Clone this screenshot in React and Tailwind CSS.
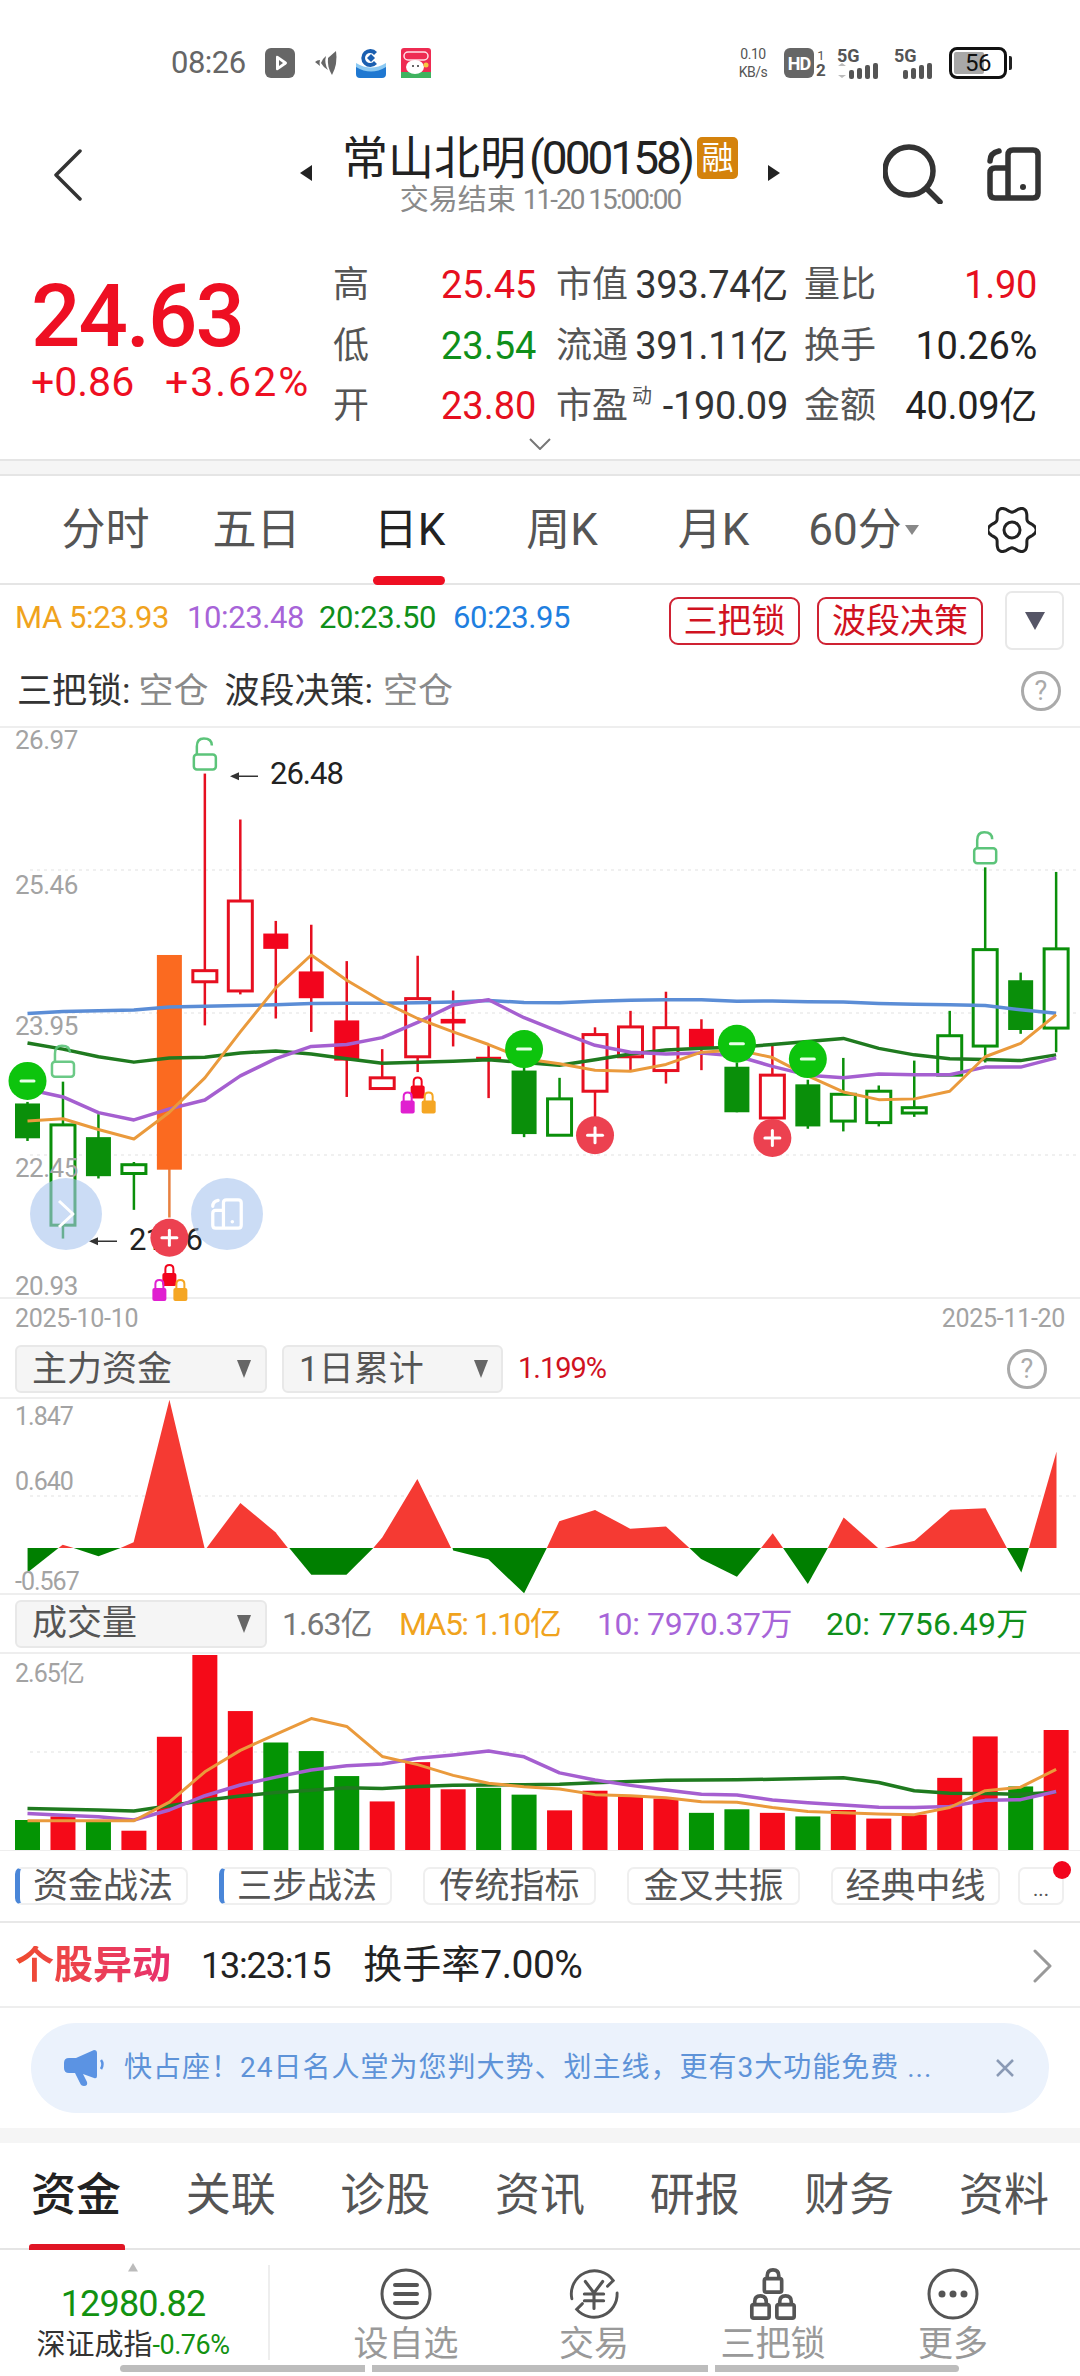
const RED = '#f2051d';
const GREEN = '#0a8f0a';

// chart data was read off the reference, y values are in crop coordinates
const candles = [
  ['G', 998, 1100, 1002, 1093],
  ['g', 945, 1355, 1058, 1320],
  ['G', 1030, 1198, 1090, 1192],
  ['g', 1155, 1280, 1162, 1185],
  ['O', 614, 1300, 614, 1175],
  ['r', 140, 798, 655, 684],
  ['r', 260, 717, 473, 708],
  ['R', 525, 780, 558, 598],
  ['R', 535, 815, 657, 727],
  ['R', 630, 985, 785, 890],
  ['r', 860, 965, 935, 963],
  ['r', 616, 920, 728, 880],
  ['R', 707, 853, 781, 793],
  ['R', 850, 988, 880, 890],
  ['G', 905, 1090, 916, 1082],
  ['g', 935, 1085, 990, 1085],
  ['r', 803, 1040, 822, 970],
  ['r', 760, 918, 802, 880],
  ['r', 710, 950, 804, 916],
  ['R', 782, 915, 807, 855],
  ['G', 895, 1025, 906, 1025],
  ['r', 850, 1050, 928, 1040],
  ['G', 940, 1068, 952, 1062],
  ['g', 883, 1075, 978, 1048],
  ['g', 955, 1062, 970, 1052],
  ['g', 890, 1037, 1013, 1027],
  ['g', 760, 930, 825, 928],
  ['g', 385, 895, 600, 852],
  ['G', 660, 820, 680, 810],
  ['g', 397, 868, 598, 805],
];

const ma60 = [767, 762, 760, 758, 750, 748, 746, 744, 741, 740, 740, 739, 737, 733, 738, 739, 735, 732, 731, 731, 735, 734, 736, 737, 741, 743, 744, 746, 757, 766];
const ma20 = [844, 860, 880, 894, 883, 881, 870, 865, 873, 885, 897, 894, 892, 888, 895, 902, 888, 873, 862, 858, 855, 848, 840, 832, 858, 875, 885, 887, 890, 875];
const ma10 = [965, 985, 1026, 1045, 1016, 993, 930, 885, 853, 848, 830, 790, 745, 731, 778, 815, 850, 868, 873, 870, 878, 905, 928, 935, 925, 927, 927, 907, 907, 883];
const ma5 = [1048, 1042, 1070, 1095, 1025, 935, 815, 700, 614, 680, 735, 780, 815, 848, 885, 898, 915, 918, 900, 868, 862, 882, 930, 972, 992, 990, 970, 880, 845, 770];

const volumes = [
  ['G', 1400], ['R', 1390], ['G', 1405], ['R', 1430], ['R', 1167], ['R', 938], ['R', 1095], ['G', 1183], ['G', 1207], ['G', 1277],
  ['R', 1348], ['R', 1238], ['R', 1314], ['G', 1310], ['G', 1329], ['R', 1373], ['R', 1318], ['R', 1330], ['R', 1340], ['G', 1380],
  ['G', 1370], ['R', 1380], ['G', 1390], ['R', 1372], ['R', 1396], ['R', 1385], ['R', 1282], ['R', 1166], ['G', 1306], ['R', 1148],
];
const vol5 = [1402, 1402, 1402, 1402, 1350, 1265, 1205, 1160, 1116, 1138, 1222, 1245, 1275, 1297, 1307, 1313, 1329, 1332, 1338, 1349, 1350, 1365, 1376, 1380, 1383, 1385, 1365, 1318, 1308, 1258];
const vol10 = [1382, 1387, 1391, 1400, 1372, 1332, 1302, 1280, 1260, 1248, 1243, 1227, 1218, 1207, 1223, 1268, 1288, 1303, 1316, 1328, 1330, 1344, 1352, 1358, 1364, 1365, 1362, 1345, 1343, 1320];
const vol20 = [1368, 1370, 1372, 1375, 1360, 1345, 1333, 1323, 1317, 1310, 1312, 1306, 1303, 1302, 1301, 1300, 1296, 1292, 1289, 1288, 1287, 1286, 1284, 1282, 1295, 1318, 1325, 1326, 1328, 1322];

const moneyRed = [
  [[85, 641], [91, 632], [107, 641]],
  [[175, 641], [194, 625], [246, 226], [297, 641]],
  [[300, 641], [349, 515], [400, 597], [418, 641]],
  [[542, 641], [555, 612], [606, 448], [655, 641]],
  [[794, 641], [812, 566], [864, 535], [915, 587], [967, 581], [1001, 641]],
  [[1105, 641], [1122, 600], [1137, 641]],
  [[1202, 641], [1225, 556], [1275, 641]],
  [[1284, 641], [1328, 621], [1380, 534], [1431, 530], [1462, 641]],
  [[1494, 641], [1534, 372], [1534, 641]],
];
const moneyGreen = [
  [[40, 641], [85, 641], [40, 710]],
  [[107, 641], [143, 664], [175, 641]],
  [[420, 641], [452, 716], [503, 716], [542, 641]],
  [[657, 641], [658, 648], [709, 673], [761, 768], [794, 641]],
  [[1001, 641], [1018, 672], [1070, 722], [1105, 641]],
  [[1137, 641], [1173, 742], [1202, 641]],
  [[1462, 641], [1483, 710], [1494, 641]],
];

const cx = (i) => 27.5 + 35.47 * i;
const kY = (z) => z / 2.613 - 8;
const moneyY = (z) => z / 2.8 - 80;
const volY = (z) => z / 2.8 - 334;

const linePoints = (arr, toY) => arr.map((v, i) => `${cx(i)},${toY(v)}`).join(' ');

// six lobed outline of the settings gear
const gearPoints = Array.from({ length: 96 }, (_, i) => {
  const a = (i / 96) * Math.PI * 2;
  const r = 21 + 3.2 * Math.cos(6 * a);
  return `${24 + r * Math.cos(a)},${24 + r * Math.sin(a)}`;
}).join(' ');

const OpenLock = ({ x, y, opacity = 1 }) => (
  <g fill="none" stroke="#5cc47a" strokeWidth="2.5" opacity={opacity} transform={`translate(${x} ${y})`}>
    <rect x="-11" y="0" width="22" height="15" rx="3" />
    <path d="M-8 0 V-8 Q-8 -16 -1 -16 Q7 -16 7 -9" />
  </g>
);

const SmallLock = ({ x, y, color }) => (
  <g transform={`translate(${x} ${y})`}>
    <rect x="-7" y="0" width="14" height="13" rx="2" fill={color} />
    <path d="M-4 1 V-4 Q-4 -8 0 -8 Q4 -8 4 -4 V1" fill="none" stroke={color} strokeWidth="2" />
  </g>
);

const LockTrio = ({ i, z }) => {
  const x = cx(i);
  const y = kY(z);
  return (
    <g>
      <SmallLock x={x} y={y} color="#f2051d" />
      <SmallLock x={x - 10} y={y + 15} color="#e01fd0" />
      <SmallLock x={x + 11} y={y + 15} color="#f5a623" />
    </g>
  );
};

const MinusDot = ({ i, z }) => (
  <g transform={`translate(${cx(i)} ${kY(z)})`}>
    <circle r="19" fill="#0dc40d" />
    <rect x="-8" y="-1.5" width="16" height="3" rx="1.5" fill="#e8ffe8" />
  </g>
);

const PlusDot = ({ i, z }) => (
  <g transform={`translate(${cx(i)} ${kY(z)})`}>
    <circle r="19" fill="#ec4150" />
    <rect x="-9" y="-1.5" width="18" height="3" rx="1.5" fill="#fff" />
    <rect x="-1.5" y="-9" width="3" height="18" rx="1.5" fill="#fff" />
  </g>
);

const PhoneIcon = ({ color, size = 54 }) => (
  <svg width={size} height={size} viewBox="0 0 54 54" fill="none" stroke={color} strokeWidth="5.5">
    <path d="M21 51 V8 Q21 3 26 3 H46 Q51 3 51 8 V46 Q51 51 46 51 H8 Q3 51 3 46 V26 Q3 21 8 21 H21" />
    <path d="M3 14 Q3 6 12 4" strokeLinecap="round" />
    <circle cx="36" cy="40" r="3" fill={color} stroke="none" />
  </svg>
);

const HelpIcon = () => (
  <span className="flex h-[40px] w-[40px] items-center justify-center rounded-full border-[3px] border-[#aaaaaa] text-[27px] leading-none text-[#aaaaaa]">?</span>
);

const Caret = ({ color = '#666666' }) => (
  <svg width="16" height="22" viewBox="0 0 16 22">
    <path d="M1 2 H15 L8 20Z" fill={color} />
  </svg>
);

const StatusBar = () => (
  <div className="flex h-[126px] items-center pl-[171px]">
    <span className="w-[94px] text-[31px] tracking-[-0.5px] text-[#666666]">08:26</span>
    <svg width="30" height="30" viewBox="0 0 30 30">
      <rect width="30" height="30" rx="6" fill="#666666" />
      <path d="M11 9 Q11 7 13 8 L21 13.5 Q23 15 21 16.5 L13 22 Q11 23 11 21Z" fill="#ffffff" />
      <path d="M14 12 L18 15 L14 18Z" fill="#666666" />
    </svg>
    <svg className="ml-[19px]" width="24" height="24" viewBox="0 0 24 24" fill="#666666">
      <path d="M22 0 Q24 13 18 24 Q13 16 14 7Z" />
      <path d="M12 5 Q10 12 14 19 Q9 16 7 12 Q9 7 12 5Z" />
      <path d="M6 9 Q5 12 6 15 L1 11 Q3 9 6 9Z" />
    </svg>
    <svg className="ml-[18px]" width="30" height="30" viewBox="0 0 30 30">
      <path d="M0 17 Q15 26 30 17 V26 Q30 30 26 30 H4 Q0 30 0 26Z" fill="#1f78d1" />
      <path d="M0 15 Q15 24 30 15 V19 Q15 28 0 19Z" fill="#8cc9f2" />
      <path d="M21 4 A9 9 0 1 0 21 16 L18 13 A5 5 0 1 1 18 7Z" fill="#1a5fb0" />
      <path d="M15 6 L19 10 L15 14 L11 10Z" fill="#1a5fb0" />
    </svg>
    <svg className="ml-[15px]" width="30" height="30" viewBox="0 0 30 30">
      <rect width="30" height="30" rx="3" fill="#ee2b52" />
      <rect x="3" y="4" width="24" height="8" rx="4" fill="none" stroke="#ffe1e8" strokeWidth="1.5" />
      <rect y="24" width="30" height="6" fill="#3fb35f" />
      <ellipse cx="14" cy="19" rx="9" ry="7" fill="#ffffff" />
      <circle cx="12" cy="18" r="1" fill="#333" />
      <circle cx="17" cy="18" r="1" fill="#333" />
      <circle cx="25" cy="17" r="2.5" fill="#f5c842" />
    </svg>

    <div className="ml-[307px] flex w-[30px] flex-col items-center text-[14px] leading-[18px] text-[#555555]">
      <span className="tracking-[-0.5px]">0.10</span>
      <span className="tracking-[-0.5px]">KB/s</span>
    </div>
    <span className="ml-[16px] flex h-[30px] w-[30px] items-center justify-center rounded-[6px] bg-[#666666] text-[18px] font-bold tracking-[-1px] text-white">HD</span>
    <div className="ml-[1px] flex w-[12px] flex-col items-center font-bold leading-[15px] text-[#555555]">
      <span className="text-[13px] font-normal">1</span>
      <span className="text-[17px]">2</span>
    </div>
    <div className="ml-[10px] flex w-[44px] flex-col">
      <span className="text-[18px] font-bold leading-[15px] text-[#555555]">5G</span>
      <svg width="44" height="16" viewBox="0 0 44 16">
        <path d="M1 3 L5 0 L9 3Z M1 12 L9 12 L5 15Z" fill="#bbbbbb" />
        <rect x="12" y="7" width="5" height="9" rx="2" fill="#555555" />
        <rect x="20" y="5" width="5" height="11" rx="2" fill="#555555" />
        <rect x="28" y="2" width="5" height="14" rx="2" fill="#555555" />
        <rect x="36" y="0" width="5" height="16" rx="2" fill="#555555" />
      </svg>
    </div>
    <div className="ml-[13px] flex w-[46px] flex-col">
      <span className="text-[18px] font-bold leading-[15px] text-[#555555]">5G</span>
      <svg width="46" height="16" viewBox="0 0 46 16">
        <rect x="9" y="7" width="5" height="9" rx="2" fill="#555555" />
        <rect x="17" y="5" width="5" height="11" rx="2" fill="#555555" />
        <rect x="25" y="2" width="5" height="14" rx="2" fill="#555555" />
        <rect x="33" y="0" width="5" height="16" rx="2" fill="#555555" />
      </svg>
    </div>
    <div className="ml-[9px] flex items-center">
      <div className="relative flex h-[32px] w-[58px] items-center rounded-[8px] border-[3px] border-[#111111] p-[2px]">
        <div className="h-full w-[30px] rounded-[2px] bg-[#a8a8a8]" />
        <span className="absolute inset-0 flex items-center justify-center text-[24px] tracking-[-0.5px] text-[#111111]">56</span>
      </div>
      <div className="ml-[2px] h-[14px] w-[3px] rounded-r-[2px] bg-[#222222]" />
    </div>
  </div>
);

const Header = () => (
  <div className="flex h-[96px]">
    <div className="w-[300px] pl-[53px] pt-[23px]">
      <svg width="30" height="52" viewBox="0 0 30 52">
        <path d="M27 2 L3 26 L27 50" fill="none" stroke="#333333" strokeWidth="3.5" strokeLinecap="round" strokeLinejoin="round" />
      </svg>
    </div>
    <div className="flex w-[480px] flex-col items-center">
      <div className="flex h-[56px] w-full items-center justify-between pt-[8px]">
        <svg className="mt-[30px]" width="12" height="16" viewBox="0 0 12 16"><path d="M12 0 V16 L0 8Z" fill="#222222" /></svg>
        <div className="flex items-center">
          <span className="text-[46px] leading-none text-[#222222]">常山北明</span>
          <span className="ml-[3px] text-[46px] leading-none tracking-[-3px] text-[#222222]">(000158)</span>
          <span className="ml-[5px] flex h-[42px] w-[41px] items-center justify-center rounded-[5px] bg-[#d4820c] text-[32px] leading-none text-white">融</span>
        </div>
        <svg className="mt-[30px]" width="12" height="16" viewBox="0 0 12 16"><path d="M0 0 V16 L12 8Z" fill="#222222" /></svg>
      </div>
      <div className="flex h-[34px] items-center pt-[2px] text-[#8a8a8a]">
        <span className="text-[29px] leading-none">交易结束</span>
        <span className="ml-[7px] text-[28px] leading-none tracking-[-2px]">11-20 15:00:00</span>
      </div>
    </div>
    <div className="flex flex-1 items-start pl-[103px] pt-[18px]">
      <svg width="60" height="60" viewBox="0 0 60 60">
        <circle cx="26" cy="27" r="24" fill="none" stroke="#333333" strokeWidth="5.5" />
        <path d="M44 45 L57 58" stroke="#333333" strokeWidth="5.5" strokeLinecap="round" />
      </svg>
      <div className="ml-[44px] mt-[3px]">
        <PhoneIcon color="#333333" />
      </div>
    </div>
  </div>
);

const quoteRows = [
  { a: '高', av: '25.45', ac: 'text-[#e60f20]', b: '市值', bv: '393.74亿', c: '量比', cv: '1.90', cc: 'text-[#e60f20]' },
  { a: '低', av: '23.54', ac: 'text-[#0f8f1a]', b: '流通', bv: '391.11亿', c: '换手', cv: '10.26%', cc: 'text-[#222222]' },
  { a: '开', av: '23.80', ac: 'text-[#e60f20]', b: '市盈', sup: '动', bv: '-190.09', c: '金额', cv: '40.09亿', cc: 'text-[#222222]' },
];

const Quote = () => (
  <div className="relative flex h-[237px]">
    <div className="w-[333px] pl-[31px] pt-[54px]">
      <div className="h-[80px] text-[87px] font-medium leading-[80px] tracking-[-2px] text-[#ee0f22]">24.63</div>
      <div className="mt-[2px] flex h-[50px] items-center text-[41px] text-[#ee0f22]">
        <span className="w-[134px]">+0.86</span>
        <span className="tracking-[2px]">+3.62%</span>
      </div>
    </div>
    <div className="pt-[33px]">
      {quoteRows.map((row) => (
        <div key={row.a} className="flex h-[60.5px] items-center text-[#555555]">
          <span className="w-[108px] text-[36px] leading-none">{row.a}</span>
          <span className={`w-[115px] text-[38px] leading-none ${row.ac}`}>{row.av}</span>
          <div className="flex w-[232px] items-center justify-between">
            <span className="relative text-[36px] leading-none">
              {row.b}
              {row.sup && <sup className="absolute left-[76px] top-[-2px] text-[20px] leading-none">{row.sup}</sup>}
            </span>
            <span className="text-[38px] leading-none tracking-[-0.3px] text-[#333333]">{row.bv}</span>
          </div>
          <div className="ml-[16px] flex w-[233px] items-center justify-between">
            <span className="text-[36px] leading-none">{row.c}</span>
            <span className={`text-[38px] leading-none tracking-[-0.3px] ${row.cc}`}>{row.cv}</span>
          </div>
        </div>
      ))}
    </div>
    <svg className="absolute left-[529px] top-[216px]" width="22" height="12" viewBox="0 0 22 12">
      <path d="M1 1 L11 11 L21 1" fill="none" stroke="#777777" strokeWidth="2" />
    </svg>
  </div>
);

const PeriodTabs = () => (
  <div className="grid h-[109px] grid-cols-[149px_153px_153px_152px_151px_149px_142px] items-center border-b-2 border-[#e5e5e5] pl-[31px] text-[44px] leading-none text-[#555555]">
    <span className="text-center">分时</span>
    <span className="text-center">五日</span>
    <span className="relative text-center text-[#222222]">
      日K
      <span className="absolute bottom-[-33px] left-[40px] h-[9px] w-[72px] rounded-[5px] bg-[#ee0f22]" />
    </span>
    <span className="text-center">周K</span>
    <span className="text-center">月K</span>
    <span className="flex items-center justify-center">
      60分
      <svg className="ml-[3px]" width="14" height="12" viewBox="0 0 14 12"><path d="M0 1 H14 L7 11Z" fill="#888888" /></svg>
    </span>
    <span className="flex justify-start pl-[50px]">
      <svg width="48" height="48" viewBox="0 0 48 48" fill="none" stroke="#222222" strokeWidth="3">
        <polygon points={gearPoints} strokeLinejoin="round" />
        <circle cx="24" cy="24" r="8" />
      </svg>
    </span>
  </div>
);

const MaRow = () => (
  <div className="flex h-[65px] items-center pl-[15px] text-[31px] leading-none">
    <span className="w-[172px] tracking-[-0.4px] text-[#f0a31d]">MA 5:23.93</span>
    <span className="w-[132px] tracking-[-0.4px] text-[#a764d8]">10:23.48</span>
    <span className="w-[134px] tracking-[-0.4px] text-[#0f8f1a]">20:23.50</span>
    <span className="w-[216px] tracking-[-0.4px] text-[#1f7fe0]">60:23.95</span>
    <span className="mt-[6px] flex h-[48px] w-[131px] items-center justify-center rounded-[9px] border-2 border-[#cf2233] text-[34px] text-[#d0121f]">三把锁</span>
    <span className="ml-[17px] mt-[6px] flex h-[48px] w-[166px] items-center justify-center rounded-[9px] border-2 border-[#cf2233] text-[34px] text-[#d0121f]">波段决策</span>
    <span className="ml-[22px] mt-[6px] flex h-[59px] w-[59px] items-center justify-center rounded-[7px] border-2 border-[#e8e8e8]">
      <svg width="20" height="18" viewBox="0 0 20 18"><path d="M0 0 H20 L10 18Z" fill="#555566" /></svg>
    </span>
  </div>
);

const SignalRow = () => (
  <div className="flex h-[78px] items-center justify-between border-b-2 border-[#eeeeee] pl-[17px] pr-[19px] pt-[6px] text-[35px] leading-none">
    <div className="flex items-center">
      <span className="text-[#333333]">三把锁:</span>
      <span className="ml-[8px] text-[#8a8a8a]">空仓</span>
      <span className="ml-[16px] text-[#333333]">波段决策:</span>
      <span className="ml-[10px] text-[#8a8a8a]">空仓</span>
    </div>
    <HelpIcon />
  </div>
);

const KChart = () => (
  <div className="relative h-[569px] w-full">
    <svg className="overflow-visible" width="1080" height="569" viewBox="0 0 1080 569">
      {[142, 285, 427].map((y) => (
        <line key={y} x1="30" x2="1080" y1={y} y2={y} stroke="#f0f0f0" strokeWidth="2" strokeDasharray="3 4" />
      ))}

      {candles.map(([type, high, low, top, bottom], i) => {
        const color = type === 'O' ? '#e8803f' : type === 'r' || type === 'R' ? '#e60f20' : GREEN;
        const hollow = type === 'r' || type === 'g';
        const fill = hollow ? '#ffffff' : type === 'O' ? '#fb6a20' : type === 'R' ? RED : GREEN;
        return (
          <g key={i}>
            <line x1={cx(i)} x2={cx(i)} y1={kY(high)} y2={kY(low)} stroke={color} strokeWidth="2.5" />
            <rect
              x={cx(i) - (hollow ? 12 : 12.5)}
              y={kY(top)}
              width={hollow ? 24 : 25}
              height={kY(bottom) - kY(top)}
              fill={fill}
              stroke={hollow ? color : 'none'}
              strokeWidth="3"
            />
          </g>
        );
      })}

      <polyline points={linePoints(ma60, kY)} fill="none" stroke="#5b8dd6" strokeWidth="3.5" strokeLinejoin="round" />
      <polyline points={linePoints(ma20, kY)} fill="none" stroke="#1f7a1f" strokeWidth="3.5" strokeLinejoin="round" />
      <polyline points={linePoints(ma10, kY)} fill="none" stroke="#a55fd0" strokeWidth="3.5" strokeLinejoin="round" />
      <polyline points={linePoints(ma5, kY)} fill="none" stroke="#ea9a3c" strokeWidth="3" strokeLinejoin="round" />

      <text x="15" y="21" className="fill-[#a3a3a3] text-[26px] tracking-[-0.5px]">26.97</text>
      <text x="15" y="166" className="fill-[#a3a3a3] text-[26px] tracking-[-0.5px]">25.46</text>
      <text x="15" y="307" className="fill-[#a3a3a3] text-[26px] tracking-[-0.5px]">23.95</text>
      <text x="15" y="449" className="fill-[#a3a3a3] text-[26px] tracking-[-0.5px]">22.45</text>
      <text x="15" y="567" className="fill-[#a3a3a3] text-[26px] tracking-[-0.5px]">20.93</text>

      <OpenLock x={cx(5)} y={kY(90)} />
      <OpenLock x={cx(1)} y={kY(893)} opacity={0.9} />
      <OpenLock x={cx(27)} y={kY(335)} />

      <LockTrio i={4} z={1445} />
      <LockTrio i={11} z={955} />

      <MinusDot i={0} z={943} />
      <MinusDot i={14} z={860} />
      <MinusDot i={20} z={846} />
      <MinusDot i={22} z={886} />

      <line x1="232" x2="258" y1={kY(147)} y2={kY(147)} stroke="#333333" strokeWidth="1.5" />
      <path d={`M230 ${kY(147)} l9 -4 v8Z`} fill="#333333" />
      <text x="270" y={kY(147) + 8} className="fill-[#222222] text-[31px] tracking-[-1px]">26.48</text>

      <line x1="91" x2="117" y1={kY(1362)} y2={kY(1362)} stroke="#333333" strokeWidth="1.5" />
      <path d={`M89 ${kY(1362)} l9 -4 v8Z`} fill="#333333" />
      <text x="129" y={kY(1362) + 9} className="fill-[#222222] text-[31px] tracking-[-1px]">21.56</text>

      <PlusDot i={4} z={1353} />
      <PlusDot i={16} z={1085} />
      <PlusDot i={21} z={1092} />
    </svg>

    <div className="absolute left-[30px] top-[450px] flex h-[72px] w-[72px] items-center justify-center rounded-full bg-[#a9c5ee]/60">
      <svg width="20" height="30" viewBox="0 0 20 30">
        <path d="M3 2 L17 15 L3 28" fill="none" stroke="#ffffff" strokeWidth="3" strokeLinejoin="round" />
      </svg>
    </div>
    <div className="absolute left-[191px] top-[450px] flex h-[72px] w-[72px] items-center justify-center rounded-full bg-[#a9c5ee]/60">
      <PhoneIcon color="#ffffff" size={32} />
    </div>
  </div>
);

const Selector = ({ label, width, caretLeft }) => (
  <div className={`relative flex h-[48px] items-center rounded-[6px] border-2 border-[#e8e8e8] bg-[#f5f5f5] pl-[15px] text-[35px] leading-none text-[#555555] ${width}`}>
    {label}
    <span className={`absolute top-[11px] ${caretLeft}`}>
      <Caret />
    </span>
  </div>
);

const MoneyChart = () => (
  <svg className="block overflow-visible" width="1080" height="194" viewBox="0 0 1080 194">
    <line x1="30" x2="1080" y1="97" y2="97" stroke="#f0f0f0" strokeWidth="2" strokeDasharray="3 4" />
    <text x="15" y="26" className="fill-[#a3a3a3] text-[25px] tracking-[-1px]">1.847</text>
    <text x="15" y="91" className="fill-[#a3a3a3] text-[25px] tracking-[-1px]">0.640</text>
    {moneyRed.map((pts, i) => (
      <polygon key={i} points={pts.map(([x, y]) => `${x / 1.452},${moneyY(y)}`).join(' ')} fill="#f53a33" />
    ))}
    {moneyGreen.map((pts, i) => (
      <polygon key={i} points={pts.map(([x, y]) => `${x / 1.452},${moneyY(y)}`).join(' ')} fill="#007f00" />
    ))}
    <text x="15" y="191" className="fill-[#a3a3a3] text-[25px] tracking-[-1px]">-0.567</text>
  </svg>
);

const VolumeChart = () => (
  <svg className="block overflow-visible" width="1080" height="196" viewBox="0 0 1080 196">
    <line x1="30" x2="1080" y1="98" y2="98" stroke="#f0f0f0" strokeWidth="2" strokeDasharray="3 4" />
    <text x="15" y="28" className="fill-[#a3a3a3] text-[25px] tracking-[-1px]">2.65亿</text>
    {volumes.map(([type, top], i) => (
      <rect key={i} x={cx(i) - 12.5} y={volY(top)} width="25" height={196 - volY(top)} fill={type === 'R' ? '#f50a18' : '#049404'} />
    ))}
    <polyline points={linePoints(vol20, volY)} fill="none" stroke="#1f7a1f" strokeWidth="3.5" strokeLinejoin="round" />
    <polyline points={linePoints(vol10, volY)} fill="none" stroke="#a55fd0" strokeWidth="3.5" strokeLinejoin="round" />
    <polyline points={linePoints(vol5, volY)} fill="none" stroke="#ea9a3c" strokeWidth="3" strokeLinejoin="round" />
  </svg>
);

const indicators = [
  { label: '资金战法', width: 'w-[173px]', bar: true },
  { label: '三步战法', width: 'w-[173px]', bar: true },
  { label: '传统指标', width: 'w-[173px]' },
  { label: '金叉共振', width: 'w-[173px]' },
  { label: '经典中线', width: 'w-[169px]' },
];

const IndicatorTabs = () => (
  <div className="relative flex h-[72px] gap-[31px] border-b-2 border-[#e8e8e8] pl-[15px] pt-[16px]">
    {indicators.map((item) => (
      <div
        key={item.label}
        className={`flex h-[38px] items-center justify-center rounded-[7px] border-2 border-[#efefef] text-[35px] leading-none text-[#555555] ${item.width} ${item.bar ? 'border-l-[5px] border-l-[#4a86d8]' : ''}`}
      >
        {item.label}
      </div>
    ))}
    <div className="ml-[-13px] flex h-[38px] w-[46px] items-end justify-center rounded-[7px] border-2 border-[#efefef] pb-[4px] text-[20px] leading-none text-[#555555]">...</div>
    <span className="absolute right-[9px] top-[10px] h-[18px] w-[18px] rounded-full bg-[#f2051d]" />
  </div>
);

const NoticeRow = () => (
  <div className="flex h-[85px] items-center border-b-2 border-[#eeeeee] pl-[15px] pr-[27px] pt-[2px]">
    <span className="bg-gradient-to-r from-[#ef4b2c] to-[#e8306e] bg-clip-text text-[39px] font-bold leading-none text-transparent">个股异动</span>
    <span className="ml-[30px] text-[36px] leading-none tracking-[-1.2px] text-[#222222]">13:23:15</span>
    <span className="ml-[33px] text-[39px] leading-none text-[#222222]">换手率</span>
    <span className="text-[39px] leading-none tracking-[-0.5px] text-[#222222]">7.00%</span>
    <svg className="ml-auto" width="20" height="34" viewBox="0 0 20 34">
      <path d="M2 2 L17 17 L2 32" fill="none" stroke="#999999" strokeWidth="3" strokeLinecap="round" strokeLinejoin="round" />
    </svg>
  </div>
);

const Banner = () => (
  <div className="px-[31px] py-[15px]">
    <div className="flex h-[90px] items-center rounded-[45px] bg-[#ebf2fc] pl-[32px] pr-[34px]">
      <svg width="44" height="36" viewBox="0 0 44 36">
        <path d="M1 13 Q1 8 6 8 H13 L31 0 Q34 0 34 3 V26 Q34 29 31 28 L20 24 L24 32 Q25 36 21 36 Q18 36 17 33 L12 23 H6 Q1 23 1 18Z" fill="#5b93e3" />
        <path d="M38 10 Q41 14 38 19" fill="none" stroke="#5b93e3" strokeWidth="2.5" />
      </svg>
      <span className="ml-[17px] flex-1 whitespace-nowrap text-[28px] leading-none tracking-[1px] text-[#5e93d8]">快占座！24日名人堂为您判大势、划主线，更有3大功能免费 ...</span>
      <svg width="20" height="20" viewBox="0 0 20 20">
        <path d="M2 2 L18 18 M18 2 L2 18" fill="none" stroke="#8a9ab5" strokeWidth="2.5" />
      </svg>
    </div>
  </div>
);

const bottomTabs = ['资金', '关联', '诊股', '资讯', '研报', '财务', '资料'];

const ContentTabs = () => (
  <div className="flex h-[107px] items-center justify-between border-b-2 border-[#e5e5e5] px-[31px] text-[45px] leading-none text-[#555555]">
    {bottomTabs.map((tab, i) => (
      <span key={tab} className={i === 0 ? 'relative font-medium text-[#222222]' : ''}>
        {tab}
        {i === 0 && <span className="absolute bottom-[-32px] left-[-2px] h-[6px] w-[96px] rounded-t-[3px] bg-[#e01525]" />}
      </span>
    ))}
  </div>
);

const ListIcon = () => (
  <svg width="52" height="52" viewBox="0 0 52 52" fill="none" stroke="#555555" strokeWidth="3">
    <circle cx="26" cy="26" r="24" />
    <path d="M15 17 H37 M15 26 H37 M15 35 H37" strokeWidth="4" strokeLinecap="round" />
  </svg>
);

const TradeIcon = () => (
  <svg width="52" height="52" viewBox="0 0 54 54" fill="none" stroke="#555555" strokeWidth="3">
    <path d="M4 32 A24 24 0 0 1 47 13 L41 19" strokeLinecap="round" />
    <path d="M51 26 A24 24 0 0 1 9 43 L15 37" strokeLinecap="round" />
    <path d="M18 14 L27 26 L36 14 M17 27 H37 M17 34 H37 M27 26 V42" strokeWidth="3.2" strokeLinecap="round" />
  </svg>
);

const ThreeLockIcon = () => (
  <svg width="52" height="52" viewBox="0 0 54 54" fill="none" stroke="#555555" strokeWidth="3.8">
    <rect x="18" y="11" width="18" height="14" rx="2" />
    <path d="M21 11 V8 Q21 2 27 2 Q33 2 33 8 V11" />
    <rect x="5" y="38" width="18" height="14" rx="2" />
    <path d="M8 38 V35 Q8 29 14 29 Q20 29 20 35 V38" />
    <rect x="31" y="38" width="18" height="14" rx="2" />
    <path d="M34 38 V35 Q34 29 40 29 Q46 29 46 35 V38" />
  </svg>
);

const MoreIcon = () => (
  <svg width="52" height="52" viewBox="0 0 52 52" fill="none" stroke="#555555" strokeWidth="3">
    <circle cx="26" cy="26" r="24" />
    <circle cx="15" cy="26" r="3.5" fill="#555555" stroke="none" />
    <circle cx="26" cy="26" r="3.5" fill="#555555" stroke="none" />
    <circle cx="37" cy="26" r="3.5" fill="#555555" stroke="none" />
  </svg>
);

const actions = [
  { label: '设自选', icon: <ListIcon />, margin: 'ml-[83px]' },
  { label: '交易', icon: <TradeIcon />, margin: 'ml-[82px]' },
  { label: '三把锁', icon: <ThreeLockIcon />, margin: 'ml-[73px]' },
  { label: '更多', icon: <MoreIcon />, margin: 'ml-[74px]' },
];

const BottomBar = () => (
  <div className="h-[125px]">
    <div className="flex h-[115px]">
      <div className="mt-[15px] flex h-[95px] w-[270px] flex-col items-center border-r-2 border-[#eeeeee] pr-[2px]">
        <svg className="mt-[-2px]" width="14" height="14" viewBox="0 0 14 14"><path d="M7 0 L14 12 H0Z" fill="#bbbbbb" /></svg>
        <span className="mt-[13px] text-[36px] leading-none tracking-[-0.8px] text-[#129211]">12980.82</span>
        <div className="mt-[9px] flex items-center leading-none">
          <span className="text-[29px] text-[#333333]">深证成指</span>
          <span className="text-[27px] tracking-[-0.5px] text-[#129211]">-0.76%</span>
        </div>
      </div>
      {actions.map((item) => (
        <div key={item.label} className={`flex w-[106px] flex-col items-center pt-[18px] ${item.margin}`}>
          {item.icon}
          <span className="mt-[7px] text-[35px] leading-none text-[#999999]">{item.label}</span>
        </div>
      ))}
    </div>
    <div className="flex gap-[7px] pl-[120px]">
      <span className="h-[7px] w-[245px] rounded-l-[4px] bg-[#bdbdbd]" />
      <span className="h-[7px] w-[336px] bg-[#bdbdbd]" />
      <span className="h-[7px] w-[244px] rounded-r-[4px] bg-[#bdbdbd]" />
    </div>
  </div>
);

export default function App() {
  return (
    <div className="h-[2376px] w-[1080px] overflow-hidden bg-white font-['Roboto','Noto_Sans_CJK_SC',sans-serif]">
      <StatusBar />
      <Header />
      <Quote />
      <div className="h-[17px] border-y-2 border-[#e5e5e5] bg-[#f5f5f5]" />
      <PeriodTabs />
      <MaRow />
      <SignalRow />
      <KChart />

      <div className="flex h-[48px] justify-between border-t-2 border-[#eeeeee] px-[15px] pt-[6px] text-[25px] leading-[28px] tracking-[-0.3px] text-[#a3a3a3]">
        <span>2025-10-10</span>
        <span>2025-11-20</span>
      </div>

      <div className="flex h-[54px] items-start gap-[15px] border-b-2 border-[#eeeeee] pl-[15px]">
        <Selector label="主力资金" width="w-[252px]" caretLeft="left-[219px]" />
        <Selector label="1日累计" width="w-[221px]" caretLeft="left-[189px]" />
        <span className="mt-[9px] text-[29px] leading-none tracking-[-1px] text-[#d0121f]">1.199%</span>
        <span className="ml-auto mr-[33px] mt-[4px]">
          <HelpIcon />
        </span>
      </div>

      <MoneyChart />
      <div className="h-[2px] bg-[#eeeeee]" />

      <div className="flex h-[59px] items-center border-b-2 border-[#eeeeee] pl-[15px] text-[32px] leading-none">
        <Selector label="成交量" width="w-[252px]" caretLeft="left-[219px]" />
        <span className="ml-[15px] w-[117px] tracking-[-1px] text-[#777777]">1.63亿</span>
        <span className="w-[198px] tracking-[-1.6px] text-[#f0a31d]">MA5: 1.10亿</span>
        <span className="w-[229px] tracking-[-0.4px] text-[#a764d8]">10: 7970.37万</span>
        <span className="tracking-[0.2px] text-[#0f8f1a]">20: 7756.49万</span>
      </div>

      <VolumeChart />
      <div className="h-[1px] bg-[#eeeeee]" />

      <IndicatorTabs />
      <NoticeRow />
      <Banner />
      <div className="h-[15px] bg-[#f5f5f5]" />
      <ContentTabs />
      <BottomBar />
    </div>
  );
}
